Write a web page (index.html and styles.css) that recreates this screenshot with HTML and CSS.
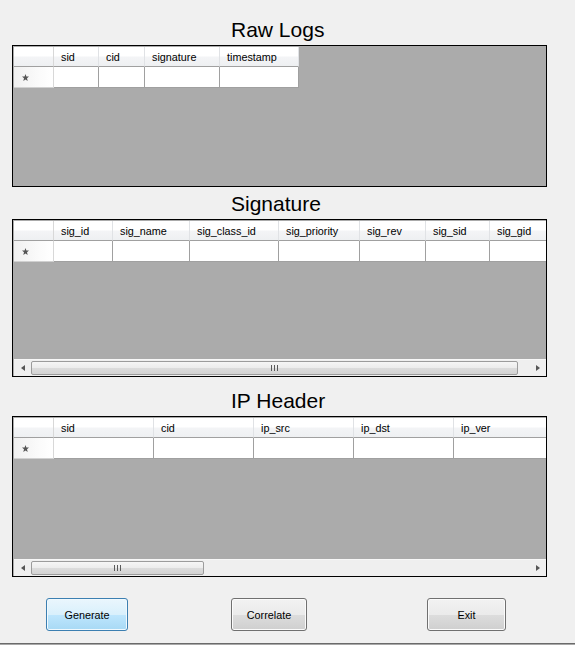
FILE: index.html
```html
<!DOCTYPE html>
<html>
<head>
<meta charset="utf-8">
<link rel="stylesheet" href="styles.css">
</head>
<body>
<div class="form">
  <h2 class="title title-first">Raw Logs</h2>
  <div class="grid grid-raw">
    <div class="rows">
      <div class="row head">
        <div class="cell rh"></div>
        <div class="cell w45">sid</div>
        <div class="cell w46">cid</div>
        <div class="cell w75">signature</div>
        <div class="cell w79">timestamp</div>
      </div>
      <div class="row data">
        <div class="cell rh"><svg class="star" width="7" height="7" viewBox="0 0 7 7"><polygon points="3.5,0 4.4,2.4 7,2.6 5,4.3 5.7,7 3.5,5.5 1.3,7 2,4.3 0,2.6 2.6,2.4" fill="#555"/></svg></div>
        <div class="cell w45"></div>
        <div class="cell w46"></div>
        <div class="cell w75"></div>
        <div class="cell w79"></div>
      </div>
    </div>
  </div>

  <h2 class="title title-sig">Signature</h2>
  <div class="grid grid-sig">
    <div class="rows">
      <div class="row head">
        <div class="cell rh"></div>
        <div class="cell w59">sig_id</div>
        <div class="cell w77">sig_name</div>
        <div class="cell w89">sig_class_id</div>
        <div class="cell w81">sig_priority</div>
        <div class="cell w66">sig_rev</div>
        <div class="cell w64">sig_sid</div>
        <div class="cell w64">sig_gid</div>
      </div>
      <div class="row data">
        <div class="cell rh"><svg class="star" width="7" height="7" viewBox="0 0 7 7"><polygon points="3.5,0 4.4,2.4 7,2.6 5,4.3 5.7,7 3.5,5.5 1.3,7 2,4.3 0,2.6 2.6,2.4" fill="#555"/></svg></div>
        <div class="cell w59"></div>
        <div class="cell w77"></div>
        <div class="cell w89"></div>
        <div class="cell w81"></div>
        <div class="cell w66"></div>
        <div class="cell w64"></div>
        <div class="cell w64"></div>
      </div>
    </div>
    <div class="hscroll">
      <div class="arrow"><span class="tri tri-left"></span></div>
      <div class="track">
        <div class="thumb thumb-sig"><span class="grip"><i></i><i></i><i></i></span></div>
      </div>
      <div class="arrow"><span class="tri tri-right"></span></div>
    </div>
  </div>

  <h2 class="title title-ip">IP Header</h2>
  <div class="grid grid-ip">
    <div class="rows">
      <div class="row head">
        <div class="cell rh"></div>
        <div class="cell w100">sid</div>
        <div class="cell w100">cid</div>
        <div class="cell w100">ip_src</div>
        <div class="cell w100">ip_dst</div>
        <div class="cell w100">ip_ver</div>
      </div>
      <div class="row data">
        <div class="cell rh"><svg class="star" width="7" height="7" viewBox="0 0 7 7"><polygon points="3.5,0 4.4,2.4 7,2.6 5,4.3 5.7,7 3.5,5.5 1.3,7 2,4.3 0,2.6 2.6,2.4" fill="#555"/></svg></div>
        <div class="cell w100"></div>
        <div class="cell w100"></div>
        <div class="cell w100"></div>
        <div class="cell w100"></div>
        <div class="cell w100"></div>
      </div>
    </div>
    <div class="hscroll">
      <div class="arrow"><span class="tri tri-left"></span></div>
      <div class="track">
        <div class="thumb thumb-ip"><span class="grip"><i></i><i></i><i></i></span></div>
      </div>
      <div class="arrow"><span class="tri tri-right"></span></div>
    </div>
  </div>

  <div class="buttons">
    <button class="btn btn-focus btn-gen">Generate</button>
    <button class="btn btn-cor">Correlate</button>
    <button class="btn btn-exit">Exit</button>
  </div>
  <div class="bottom-line"></div>
</div>
</body>
</html>
```

FILE: styles.css
```css
html, body {
  margin: 0;
  padding: 0;
  background: #f0f0f0;
}
body {
  width: 575px;
  height: 645px;
  overflow: hidden;
  font-family: "Liberation Sans", Arial, sans-serif;
}
.form {
  padding-top: 18px;
}
.title {
  margin: 0;
  padding-left: 231px;
  font-size: 21px;
  font-weight: normal;
  line-height: 24px;
  height: 24px;
  color: #000;
}
.title-first { margin-top: 0; }
.title-sig { margin-top: 5px; }
.title-ip { margin-top: 12px; }

.grid {
  margin: 3px 0 0 12px;
  width: 535px;
  box-sizing: border-box;
  border: 1px solid #000;
  background: #ababab;
  display: flex;
  flex-direction: column;
  overflow: hidden;
}
.grid-raw { height: 142px; }
.grid-sig { height: 158px; }
.grid-ip { height: 161px; }

.rows {
  flex: 1;
  padding: 1px 0 0 1px;
  overflow: hidden;
}
.row {
  display: flex;
  white-space: nowrap;
}
.cell {
  flex: none;
  box-sizing: border-box;
  font-size: 10.8px;
  color: #000;
  padding-left: 7px;
  overflow: hidden;
}
.head .cell {
  height: 20px;
  line-height: 19px;
  padding-top: 1px;
  background: linear-gradient(#ffffff 0%, #ffffff 45%, #f3f4f6 55%, #eef0f2 100%);
  border-right: 1px solid #e0e2e5;
  border-bottom: 1px solid #a0a0a0;
}
.data .cell {
  height: 21px;
  background: #fff;
  border-right: 1px solid #a0a0a0;
  border-bottom: 1px solid #a0a0a0;
}
.head .cell.rh {
  width: 40px;
  border-right: 1px solid #d8d8d8;
}
.data .cell.rh {
  width: 40px;
  padding-left: 8px;
  background: linear-gradient(90deg, #f0f0f0 0%, #fafafa 60%, #ffffff 100%);
  border-right: 1px solid #d8d8d8;
  border-bottom: 1px solid #d0d0d0;
  display: flex;
  align-items: center;
}
.star { display: block; }

.w45 { width: 45px; }
.w46 { width: 46px; }
.w59 { width: 59px; }
.w64 { width: 64px; }
.w66 { width: 66px; }
.w75 { width: 75px; }
.w77 { width: 77px; }
.w79 { width: 79px; }
.w81 { width: 81px; }
.w89 { width: 89px; }
.w100 { width: 100px; }

.hscroll {
  flex: none;
  height: 17px;
  margin: 0 0 0 1px;
  display: flex;
  background: #efefef;
  border-top: 1px solid #f8f8f8;
  box-sizing: border-box;
}
.arrow {
  width: 17px;
  flex: none;
  display: flex;
  align-items: center;
  justify-content: center;
}
.tri {
  width: 0;
  height: 0;
  border-top: 3.5px solid transparent;
  border-bottom: 3.5px solid transparent;
}
.tri-left { border-right: 4px solid #555; }
.tri-right { border-left: 4px solid #555; }
.track {
  flex: 1;
  display: flex;
  align-items: center;
}
.thumb {
  height: 14px;
  box-sizing: border-box;
  border: 1px solid #9c9c9c;
  border-radius: 2px;
  background: linear-gradient(#f6f6f6 0%, #ececec 50%, #dcdcdc 51%, #d3d3d3 100%);
  display: flex;
  align-items: center;
  justify-content: center;
}
.thumb-sig { width: 487px; }
.thumb-ip { width: 173px; }
.grip {
  display: flex;
  gap: 2px;
}
.grip i {
  display: block;
  width: 1px;
  height: 6px;
  background: #5a5a5a;
}

.buttons {
  display: flex;
  margin-top: 21px;
  padding-left: 46px;
  height: 33px;
}
.btn {
  box-sizing: border-box;
  height: 33px;
  padding: 0;
  font-family: "Liberation Sans", Arial, sans-serif;
  font-size: 10.8px;
  color: #000;
  border: 1px solid #707070;
  border-radius: 3px;
  background: linear-gradient(#f2f2f2 0%, #ebebeb 50%, #dddddd 51%, #cfcfcf 100%);
  box-shadow: inset 0 0 0 1px #fbfbfb;
}
.btn-focus {
  border-color: #3c7fb1;
  background: linear-gradient(#eaf6fd 0%, #d9f0fc 50%, #bee6fd 51%, #a7d9f5 100%);
  box-shadow: inset 0 0 0 1px #f0f9fe;
}
.btn-gen { width: 82px; }
.btn-cor { width: 76px; margin-left: 103px; }
.btn-exit { width: 79px; margin-left: 120px; }

.bottom-line {
  margin-top: 12px;
  height: 1px;
  background: #6a6a6a;
  border-bottom: 1px solid #a8a8a8;
}
```
